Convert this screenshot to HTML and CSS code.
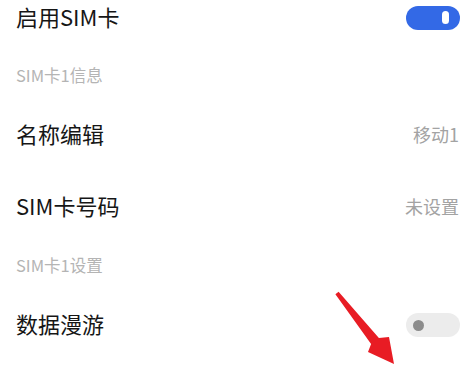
FILE: index.html
```html
<!DOCTYPE html>
<html lang="zh-CN">
<head>
<meta charset="utf-8">
<title>SIM卡设置</title>
<link rel="stylesheet" href="styles.css">
</head>
<body>
<div class="page">
  <div class="row row-first">
    <span class="label">启用SIM卡</span>
    <span class="switch switch-on"><span class="knob-bar"></span></span>
  </div>
  <div class="section section-first">SIM卡1信息</div>
  <div class="row">
    <span class="label">名称编辑</span>
    <span class="value">移动1</span>
  </div>
  <div class="row">
    <span class="label">SIM卡号码</span>
    <span class="value">未设置</span>
  </div>
  <div class="section section-second">SIM卡1设置</div>
  <div class="row">
    <span class="label">数据漫游</span>
    <span class="switch switch-off"><span class="knob-dot"></span></span>
  </div>
</div>
<svg class="arrow" width="467" height="383" viewBox="0 0 467 383" aria-hidden="true">
  <polygon points="338.6,291.8 378.9,337.9 389,337 394,364 368,352 371.1,344.1 335.4,294.2" fill="#e81c24"/>
</svg>
</body>
</html>
```

FILE: styles.css
```css
html, body {
  margin: 0;
  padding: 0;
  background: #ffffff;
}
body {
  width: 467px;
  height: 383px;
  overflow: hidden;
  position: relative;
  font-family: "Noto Sans CJK SC", "Noto Sans", sans-serif;
}
.page {
  display: flex;
  flex-direction: column;
  padding: 0 7px 0 16px;
}
.row {
  display: flex;
  align-items: center;
  justify-content: space-between;
  height: 72px;
}
.row-first {
  height: 35px;
}
.label {
  font-size: 22px;
  line-height: 30px;
  color: #161616;
  margin-top: -4px;
}
.value {
  font-size: 18px;
  line-height: 26px;
  color: #a3a3a3;
  margin-right: 1px;
  margin-top: -2px;
}
.section {
  box-sizing: border-box;
  font-size: 16.5px;
  line-height: 24px;
  color: #b4b4b4;
}
.section-first {
  height: 64px;
  padding-top: 28px;
}
.section-second {
  height: 46px;
  padding-top: 10px;
}
.switch {
  box-sizing: border-box;
  width: 54px;
  height: 24px;
  border-radius: 12px;
  display: flex;
  align-items: center;
}
.switch-on {
  background: #3369e6;
  justify-content: flex-end;
  padding-right: 11px;
}
.switch-off {
  background: #ececec;
  justify-content: flex-start;
  padding-left: 7px;
}
.knob-bar {
  width: 7px;
  height: 13px;
  border-radius: 3.5px;
  background: #ffffff;
}
.knob-dot {
  width: 11px;
  height: 11px;
  border-radius: 50%;
  background: #8c8c8c;
}
.arrow {
  position: absolute;
  left: 0;
  top: 0;
  pointer-events: none;
}
```
